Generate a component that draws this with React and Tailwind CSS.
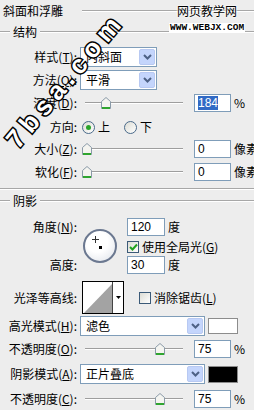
import React from "react";

const cjk = "font-['Noto_Sans_CJK_SC','Noto_Sans_CJK_JP',sans-serif]";
const lat = "font-['Liberation_Sans',Arial,sans-serif]";

function Etch({ className = "" }) {
  return <div className={"h-0 border-t border-b border-t-[#a7a7a7] border-b-white " + className} />;
}

function Label({ children, className = "" }) {
  return (
    <div className={"w-[77px] shrink-0 whitespace-nowrap text-right text-[12px] leading-[14px] text-black " + cjk + " " + className}>
      {children}
    </div>
  );
}

function U({ children }) {
  return <span className="underline underline-offset-1">{children}</span>;
}

function Chevron() {
  return (
    <svg width="9" height="6" viewBox="0 0 9 6">
      <path d="M1 1 L4.5 4.5 L8 1" fill="none" stroke="#4d6185" strokeWidth="2" />
    </svg>
  );
}

function Dropdown({ w, value }) {
  return (
    <div className={"flex h-full shrink-0 items-stretch border border-[#7f9db9] bg-white " + w}>
      <div className={"flex flex-1 items-center whitespace-nowrap pl-[5px] text-[12px] leading-[14px] " + cjk}>{value}</div>
      <div className="m-[1px] flex w-[16px] items-center justify-center rounded-[2px] border border-[#b8c9f2] bg-[#c4d5fc]">
        <Chevron />
      </div>
    </div>
  );
}

function Thumb() {
  return (
    <svg width="10" height="12" viewBox="0 0 10 12">
      <path d="M0.5 4.5 L5 0.5 L9.5 4.5 L9.5 11.5 L0.5 11.5 Z" fill="#f4f4f0" stroke="#8a9aa8" strokeWidth="1" />
      <path d="M1 11 L9 11" stroke="#2fa52f" strokeWidth="2" />
    </svg>
  );
}

function Slider({ pos }) {
  return (
    <div className="relative ml-[8px] flex h-full w-[98px] shrink-0 items-center">
      <div className="h-0 w-full border-t border-b border-t-[#9e9e9e] border-b-white" />
      <div className="absolute top-[3px]" style={{ left: pos - 5 }}>
        <Thumb />
      </div>
    </div>
  );
}

function Input({ children, w = "w-[37px]", className = "" }) {
  return (
    <div className={"flex h-full shrink-0 items-center border border-[#7f9db9] bg-white pl-[3px] text-[12px] leading-[14px] " + lat + " " + w + " " + className}>
      {children}
    </div>
  );
}

function Unit({ children }) {
  return <div className={"ml-[3px] shrink-0 whitespace-nowrap text-[12px] leading-[14px] " + cjk}>{children}</div>;
}

function Radio({ on }) {
  return (
    <div className="flex h-[13px] w-[13px] shrink-0 items-center justify-center rounded-full border border-[#4a6a8a] bg-gradient-to-br from-[#dcdcd4] to-white">
      {on && <div className="h-[5px] w-[5px] rounded-full bg-[#2aa42a]" />}
    </div>
  );
}

function Check({ on }) {
  return (
    <div className="flex h-[12px] w-[12px] shrink-0 items-center justify-center border border-[#3b5a78] bg-gradient-to-br from-[#dcdcd4] to-white">
      {on && (
        <svg width="9" height="8" viewBox="0 0 9 8">
          <path d="M1 4 L3.5 6.5 L8 1.5" fill="none" stroke="#21a121" strokeWidth="2" />
        </svg>
      )}
    </div>
  );
}

function GroupHead({ text }) {
  return (
    <div className="flex h-[20px] items-center">
      <Etch className="w-[10px]" />
      <div className={"ml-[3px] text-[12px] leading-[14px] " + cjk}>{text}</div>
      <Etch className="ml-[3px] flex-1" />
    </div>
  );
}

export default function App() {
  return (
    <div className="relative h-[410px] w-[254px] overflow-hidden bg-[#ededed] text-black">
      <div className="flex flex-col">
        {/* Title */}
        <div className="flex h-[22px] items-center">
          <div className={"pl-[3px] text-[12px] leading-[14px] " + cjk}>斜面和浮雕</div>
          <Etch className="ml-[19px] flex-1" />
        </div>
        <GroupHead text="结构" />

        <div className="mt-[5px] flex h-[20px] items-center">
          <Label>样式(<U>T</U>):</Label>
          <div className="ml-[3px] h-full">
            <Dropdown w="w-[77px]" value="内斜面" />
          </div>
        </div>
        <div className="mt-[3px] flex h-[20px] items-center">
          <Label>方法(<U>Q</U>):</Label>
          <div className="ml-[3px] h-full">
            <Dropdown w="w-[77px]" value="平滑" />
          </div>
        </div>

        <div className="mt-[4px] flex h-[18px] items-center">
          <Label>深度(<U>D</U>):</Label>
          <Slider pos={21} />
          <div className="ml-[11px] h-full">
            <Input>
              <span className="bg-[#316ac5] text-white">184</span>
            </Input>
          </div>
          <Unit>%</Unit>
        </div>

        <div className="mt-[6px] flex h-[18px] items-center">
          <Label>方向:</Label>
          <div className="ml-[5px] flex items-center">
            <Radio on />
            <span className={"ml-[3px] text-[12px] leading-[14px] " + cjk}>上</span>
          </div>
          <div className="ml-[14px] flex items-center">
            <Radio />
            <span className={"ml-[3px] text-[12px] leading-[14px] " + cjk}>下</span>
          </div>
        </div>

        <div className="mt-[4px] flex h-[18px] items-center">
          <Label>大小(<U>Z</U>):</Label>
          <Slider pos={2} />
          <div className="ml-[11px] h-full">
            <Input>0</Input>
          </div>
          <Unit>像素</Unit>
        </div>
        <div className="mt-[5px] flex h-[18px] items-center">
          <Label>软化(<U>F</U>):</Label>
          <Slider pos={2} />
          <div className="ml-[11px] h-full">
            <Input>0</Input>
          </div>
          <Unit>像素</Unit>
        </div>

        <Etch className="mt-[7px] w-full" />
        <div className="mt-[1px]">
          <GroupHead text="阴影" />
        </div>

        {/* Angle block */}
        <div className="mt-[7px] flex">
          <div className="flex flex-col">
            <div className="flex h-[18px] items-center">
              <Label>角度(<U>N</U>):</Label>
            </div>
            <div className="mt-[20px] flex h-[18px] items-center">
              <Label>高度:</Label>
            </div>
          </div>
          <div className="ml-[6px] mt-[11px]">
            <div className="relative h-[34px] w-[34px] rounded-full border-[2px] border-[#6b7890] bg-[radial-gradient(circle_at_40%_35%,#ffffff_40%,#dde1e8)]">
              <div className="absolute left-[10px] top-[5px] h-[7px] w-[1px] bg-[#333]" />
              <div className="absolute left-[7px] top-[8px] h-[1px] w-[7px] bg-[#333]" />
              <div className="absolute left-[14px] top-[15px] h-[3px] w-[3px] bg-black" />
            </div>
          </div>
          <div className="ml-[10px] flex flex-col">
            <div className="flex h-[18px] items-center">
              <div className="h-full">
                <Input w="w-[38px]">120</Input>
              </div>
              <Unit>度</Unit>
            </div>
            <div className="mt-[5px] flex h-[12px] items-center">
              <Check on />
              <span className={"ml-[3px] whitespace-nowrap text-[12px] leading-[14px] " + cjk}>
                使用全局光(<U>G</U>)
              </span>
            </div>
            <div className="mt-[3px] flex h-[18px] items-center">
              <div className="h-full">
                <Input w="w-[38px]">30</Input>
              </div>
              <Unit>度</Unit>
            </div>
          </div>
        </div>

        {/* Contour */}
        <div className="mt-[7px] flex h-[33px] items-center">
          <Label>光泽等高线:</Label>
          <div className="ml-[5px] flex h-full w-[42px] shrink-0 border border-black bg-white">
            <svg width="29" height="31" viewBox="0 0 29 31" className="block">
              <path d="M1 31 L29 2 L29 31 Z" fill="#a3a3a3" />
            </svg>
            <div className="flex flex-1 items-center justify-center border-l border-[#444] bg-white">
              <svg width="5" height="3" viewBox="0 0 5 3">
                <path d="M0 0 L5 0 L2.5 3 Z" fill="#000" />
              </svg>
            </div>
          </div>
          <div className="ml-[15px] flex items-center">
            <Check />
            <span className={"ml-[3px] whitespace-nowrap text-[12px] leading-[14px] " + cjk}>
              消除锯齿(<U>L</U>)
            </span>
          </div>
        </div>

        <div className="mt-[2px] flex h-[20px] items-center">
          <Label>高光模式(<U>H</U>):</Label>
          <div className="ml-[3px] h-full">
            <Dropdown w="w-[125px]" value="滤色" />
          </div>
          <div className="ml-[3px] h-[16px] w-[30px] shrink-0 border border-[#8c8c8c] bg-white" />
        </div>
        <div className="mt-[4px] flex h-[18px] items-center">
          <Label>不透明度(<U>O</U>):</Label>
          <Slider pos={75} />
          <div className="ml-[11px] h-full">
            <Input>75</Input>
          </div>
          <Unit>%</Unit>
        </div>
        <div className="mt-[6px] flex h-[20px] items-center">
          <Label>阴影模式(<U>A</U>):</Label>
          <div className="ml-[3px] h-full">
            <Dropdown w="w-[125px]" value="正片叠底" />
          </div>
          <div className="ml-[3px] h-[17px] w-[30px] shrink-0 border border-[#8c8c8c] bg-black" />
        </div>
        <div className="mt-[6px] flex h-[18px] items-center">
          <Label>不透明度(<U>C</U>):</Label>
          <Slider pos={75} />
          <div className="ml-[11px] h-full">
            <Input>75</Input>
          </div>
          <Unit>%</Unit>
        </div>
      </div>

      {/* Watermarks */}
      <div className="pointer-events-none absolute left-[177px] top-[4px]">
        <div
          className={
            "text-[12px] leading-[14px] text-black [text-shadow:0_0_2px_white,0_0_2px_white,0_0_2px_white] " + cjk
          }
        >
          网页教学网
        </div>
      </div>
      <div className="pointer-events-none absolute left-[169px] top-[23px] bg-white px-[1px]">
        <div className="font-['Liberation_Mono',monospace] text-[9.5px] font-bold leading-[10px] text-black">
          WWW.WEBJX.COM
        </div>
      </div>
      <div className="pointer-events-none absolute left-[-20px] top-[64px] flex h-[32px] w-[170px] items-center justify-center [transform:rotate(-50deg)]">
        <span
          className={
            "whitespace-nowrap text-[26px] font-bold leading-[32px] tracking-[6px] text-white [-webkit-text-stroke:3px_black] [paint-order:stroke_fill] " +
            lat
          }
        >
          7bsa.com
        </span>
      </div>
    </div>
  );
}
